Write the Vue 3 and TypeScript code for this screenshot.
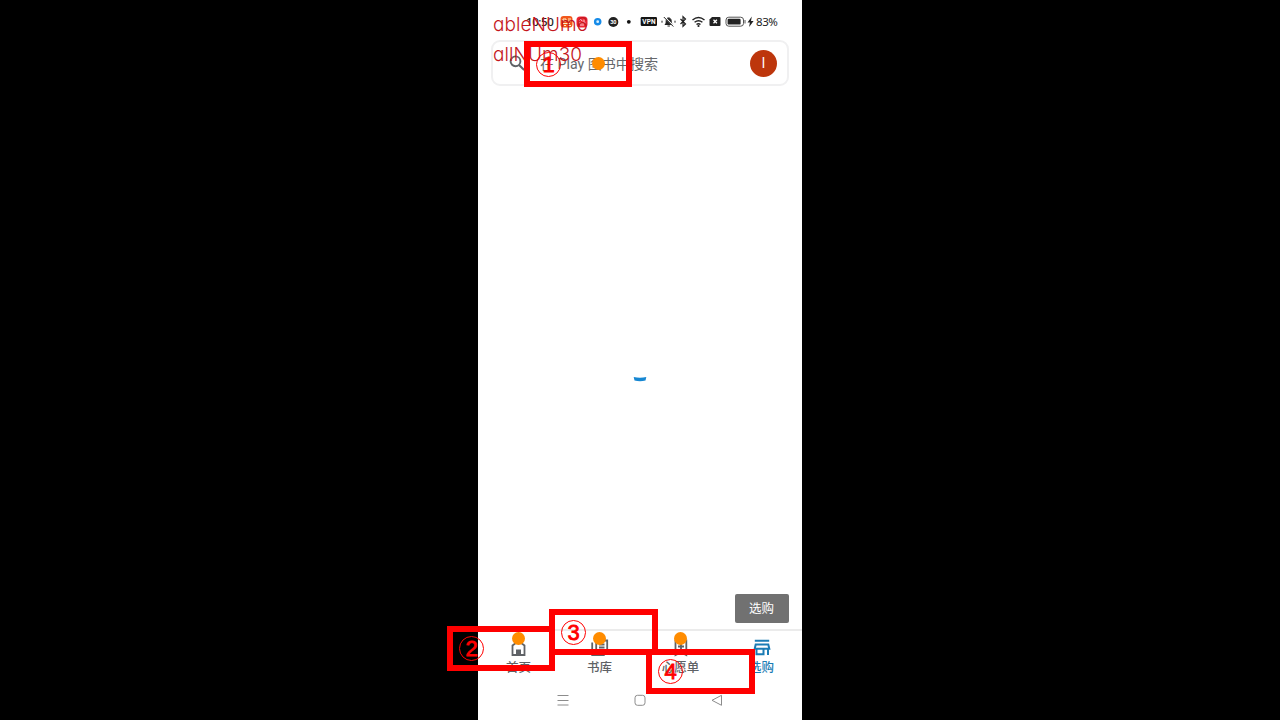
<script setup lang="ts">
interface Mark { n: number; id: string }
const marks: Mark[] = [
  { n: 1, id: 'm1' },
  { n: 2, id: 'm2' },
  { n: 3, id: 'm3' },
  { n: 4, id: 'm4' },
]
const tabs = [
  { label: '首页', icon: 'home', active: false },
  { label: '书库', icon: 'library', active: false },
  { label: '心愿单', icon: 'wish', active: false },
  { label: '选购', icon: 'shop', active: true },
]
const dots = ['d1', 'd2', 'd3', 'd4']
</script>

<template>
  <div class="stage">
    <main class="phone">
      <header class="status">
        <span class="clock">10:50</span>
        <svg class="notes" width="76" height="16" viewBox="0 0 76 16">
          <rect x="0.500" y="2" width="12" height="11.500" rx="3" fill="#f2581b" />
          <path d="M3 5h3v2H3zM8 5h3M8 7h3M3 9.500h7M4 11.500h2M8 11.500h3" fill="none" stroke="#fff0c8" stroke-width="1" />
          <rect x="16.500" y="2.500" width="11" height="11" rx="3.500" fill="#ed2536" />
          <path d="M18.500 7l2-1.500 2 1.500M24 5.500v3M18.500 9h7M20 11h4" fill="none" stroke="#ffd8d8" stroke-width="1" />
          <circle cx="37.700" cy="7.700" r="2.600" fill="#d8f0ff" stroke="#168be8" stroke-width="2.400" />
          <circle cx="53.300" cy="8" r="5" fill="#222" />
          <text x="53.300" y="10.200" text-anchor="middle" class="tiny">30</text>
          <circle cx="68.800" cy="7.800" r="1.900" fill="#111" />
        </svg>
        <svg class="system" width="116" height="16" viewBox="0 0 116 16">
          <rect x="0.700" y="3" width="16.300" height="9" rx="1.200" fill="#151515" />
          <text x="9" y="9.900" text-anchor="middle" class="vpn">VPN</text>
          <path d="M25 10.500c1.400-1 1-2.500 1.200-4 .2-3.500 4.600-3.500 5 0 .2 1.700 0 3 1.400 4zM27.500 12h2.400" fill="#222" stroke="#222" />
          <path d="M24.500 3l9 9" stroke="#fff" stroke-width="1.600" />
          <path d="M23.800 3l9.500 9.500M22 6.700v2M35 6.700v2" stroke="#222" stroke-width="1" />
          <path d="M40.500 5l5 5-2.500 2.300V2.700L45.500 5l-5 5" fill="none" stroke="#222" stroke-width="1.200" />
          <path d="M52.500 6q6-5 12 0M54.600 8.300q3.900-3 7.800 0M56.500 10.500q2-1.400 4 0" fill="none" stroke="#222" stroke-width="1.450" />
          <circle cx="58.500" cy="12" r="1.100" fill="#222" />
          <path d="M72 3h7.500q1 0 1 1v7q0 1-1 1h-9q-1 0-1-1V5.500z" fill="#222" />
          <path d="M73.500 5.800l3.400 3.400M76.900 5.800l-3.400 3.400" stroke="#fff" stroke-width="1.300" />
          <rect x="86" y="3.200" width="17.500" height="9" rx="2.800" fill="none" stroke="#555" />
          <rect x="87.600" y="4.800" width="13" height="5.800" rx="1.200" fill="#222" />
          <path d="M105 6v3.500" stroke="#555" />
          <path d="M111.800 2.500l-4.300 6h2.400l-.8 4.500 4.500-6H111z" fill="#222" />
        </svg>
        <span class="percent">83%</span>
      </header>

      <section class="search">
        <svg class="lens" width="18" height="18" viewBox="0 0 18 18">
          <circle cx="6.500" cy="7.300" r="4.900" fill="none" stroke="#606367" stroke-width="1.900" />
          <path d="M10 11l5.200 5" stroke="#606367" stroke-width="2.100" />
        </svg>
        <span class="hint">在 Play 图书中搜索</span>
        <span class="avatar">l</span>
      </section>

      <section class="content">
        <svg class="spinner" width="14" height="6" viewBox="0 0 14 6">
          <path d="M.7 1q6.300 1.600 12.600 0l-.8 3.500q-5.500 1.500-11 0z" fill="#1687d2" />
        </svg>
        <div class="toast">选购</div>
      </section>

      <nav class="tabs">
        <div v-for="t in tabs" :key="t.icon" class="tab" :class="{ active: t.active }">
          <svg width="20" height="20" viewBox="0 0 20 20" fill="none" stroke="currentColor" stroke-width="1.800">
            <template v-if="t.icon === 'home'">
              <path d="M3.500 7.500l6-4.500 6 4.500V17h-12z" />
              <path d="M7 11.500h5V17H7z" fill="currentColor" stroke="none" />
            </template>
            <path v-else-if="t.icon === 'library'" d="M6.200 2.500h11v11.500h-11zM2.200 4.500v12.600h12.500M9 6.500h5.500M9 9.500h5.500" />
            <path v-else-if="t.icon === 'wish'" d="M4.500 2.500h10.800v14.500L10 14.500 4.500 17zM10 5.500v6M7 8.500h6" />
            <path v-else d="M2.800 2.800h14.400M3.700 6.500h12.600l1 4.200H2.700zM4.500 10.500v5.700h7v-5.700M16 10.500v6.500" stroke-width="2" />
          </svg>
          <span>{{ t.label }}</span>
        </div>
      </nav>

      <footer class="keys">
        <svg width="14" height="14" viewBox="0 0 14 14"><path d="M1.500 2.500h11M1.500 7.500h11M1.500 12h11" /></svg>
        <svg width="14" height="14" viewBox="0 0 14 14"><rect x="2" y="2.300" width="10" height="10" rx="2.500" /></svg>
        <svg width="14" height="14" viewBox="0 0 14 14"><path d="M2 7.300l9.500-5v10z" /></svg>
      </footer>
    </main>

    <svg class="counts" width="110" height="60" viewBox="0 0 110 60">
      <text x="2" y="21" textLength="95">ableNUm6</text>
      <text x="2" y="51" textLength="89">allNUm30</text>
    </svg>
    <i v-for="d in dots" :key="d" class="dot" :class="d" />
    <div v-for="m in marks" :key="m.id" class="mark" :class="m.id"><b>{{ m.n }}</b></div>
  </div>
</template>

<style>
html, body { margin: 0; background: #000; overflow: hidden; }
</style>

<style scoped>
.stage { position: relative; width: 1280px; height: 720px; background: #000; display: flex; justify-content: center; overflow: hidden; font-family: Roboto, "Noto Sans CJK SC", sans-serif; }
.phone { width: 324px; height: 720px; background: #fff; display: flex; flex-direction: column; }
.status { height: 40px; flex: none; display: flex; align-items: flex-start; padding-top: 14px; box-sizing: border-box; line-height: 16px; white-space: nowrap; }
.clock { margin-left: 48px; width: 34px; font: 500 11.500px/16px "Noto Sans", sans-serif; letter-spacing: -.4px; color: #222; }
.notes { flex: none; }
.system { flex: none; margin-left: 4px; }
.percent { font: 11.500px/16px "Noto Sans", sans-serif; letter-spacing: -.4px; color: #222; }
.tiny { font: bold 5.500px Roboto, sans-serif; fill: #fff; }
.vpn { font: bold 6.500px Roboto, sans-serif; fill: #fff; letter-spacing: .2px; }
.search { height: 46px; flex: none; margin: 0 13px; box-sizing: border-box; border: 2px solid #f0f0f1; border-radius: 9px; display: flex; align-items: center; padding: 0 10px 0 16px; }
.lens { flex: none; }
.hint { margin: 1px 0 0 13px; flex: 1; font-size: 14.100px; line-height: 20px; color: #66686b; white-space: nowrap; }
.avatar { width: 27px; height: 27px; border-radius: 50%; background: #bd360c; color: #fff; text-align: center; font-size: 14px; line-height: 27px; }
.content { flex: 1; display: flex; flex-direction: column; }
.spinner { margin: 290px auto 0; flex: none; }
.toast { margin: auto 13.500px 6px auto; width: 54px; height: 29px; background: #717171; border-radius: 2px; color: #fff; font-size: 12.500px; line-height: 30px; text-align: center; }
.tabs { height: 54px; flex: none; display: flex; box-sizing: border-box; border-top: 2px solid #ebebeb; }
.tab { flex: 1; display: flex; flex-direction: column; align-items: center; padding-top: 7px; color: #5f6266; font-size: 12.500px; font-weight: 500; line-height: 18px; }
.tab span { margin-top: 1px; }
.tab.active { color: #1b7cb5; }
.keys { height: 37px; flex: none; display: flex; justify-content: center; gap: 63px; padding-top: 10px; box-sizing: border-box; }
.keys svg { fill: none; stroke: #8c8c8c; stroke-width: 1; }
.counts { position: absolute; left: 491px; top: 10px; font: 300 19px Inter, sans-serif; font-feature-settings: "cv11" 1; fill: #c4161c; }
.dot { position: absolute; width: 13px; height: 13px; border-radius: 50%; background: #ff8c00; }
.d1 { left: 592px; top: 57px; }
.d2 { left: 512px; top: 632px; }
.d3 { left: 593px; top: 632px; }
.d4 { left: 674px; top: 632px; }
.mark { position: absolute; box-sizing: border-box; width: 108px; height: 46px; border: 6px solid #f00; display: flex; align-items: center; padding-left: 6px; }
.mark b { box-sizing: border-box; flex: none; width: 25px; height: 25px; border: 1.500px solid #f00; border-radius: 50%; color: #f00; font: 400 22px/24px "Liberation Sans", sans-serif; -webkit-text-stroke: .8px #f00; text-align: center; }
.m1 { left: 524px; top: 41px; }
.m2 { left: 447px; top: 626px; height: 45px; }
.m3 { left: 549px; top: 609px; width: 109px; }
.m4 { left: 646px; top: 649px; width: 109px; height: 45px; }
</style>
